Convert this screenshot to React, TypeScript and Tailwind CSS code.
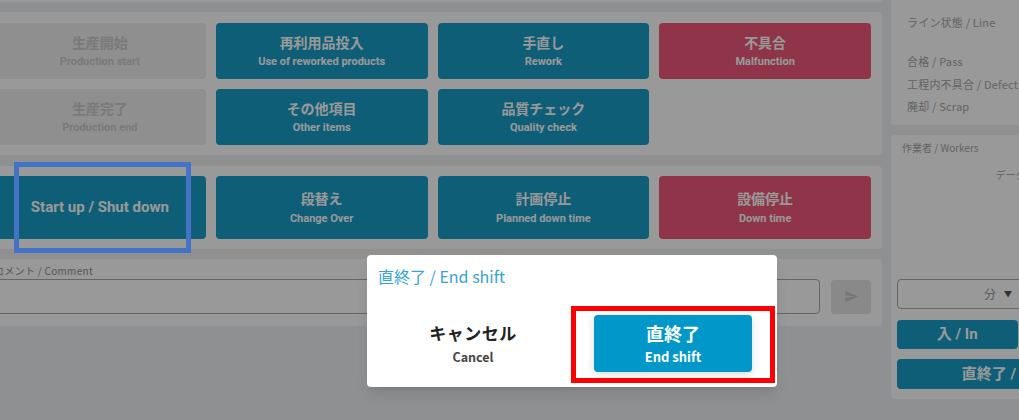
const sans = "font-['Roboto','Noto_Sans_CJK_JP',sans-serif]";
const jp = "font-['Noto_Sans_CJK_JP',sans-serif]";

type Btn = { ja: string; en: string; tone: 'off' | 'teal' | 'red' };

const topRows: (Btn | null)[] = [
  { ja: '生産開始', en: 'Production start', tone: 'off' },
  { ja: '再利用品投入', en: 'Use of reworked products', tone: 'teal' },
  { ja: '手直し', en: 'Rework', tone: 'teal' },
  { ja: '不具合', en: 'Malfunction', tone: 'red' },
  { ja: '生産完了', en: 'Production end', tone: 'off' },
  { ja: 'その他項目', en: 'Other items', tone: 'teal' },
  { ja: '品質チェック', en: 'Quality check', tone: 'teal' },
  null,
];

const stopRow: Btn[] = [
  { ja: '段替え', en: 'Change Over', tone: 'teal' },
  { ja: '計画停止', en: 'Planned down time', tone: 'teal' },
  { ja: '設備停止', en: 'Down time', tone: 'red' },
];

function toneClass(tone: Btn['tone']) {
  if (tone === 'off') return 'bg-[#eeeeee] text-[#cbcbcb]';
  if (tone === 'red') return 'bg-[#ee577b] text-white';
  return 'bg-[#189dc8] text-white';
}

function ActionButton({ b, tall }: { b: Btn; tall?: boolean }) {
  return (
    <div
      className={`flex flex-col items-center justify-center rounded-[4px] font-bold ${tall ? 'h-[63px]' : 'h-[56px]'} ${toneClass(b.tone)}`}
    >
      <span className="text-[14px] leading-[18px]">{b.ja}</span>
      <span className={`text-[11px] leading-[15px] ${tall ? 'mt-[3px]' : 'mt-[2px]'}`}>{b.en}</span>
    </div>
  );
}

function SendIcon() {
  return (
    <svg viewBox="0 0 24 24" className="h-[15px] w-[15px]" fill="currentColor">
      <path d="M2.01 21L23 12 2.01 3 2 10l15 2-15 2z" />
    </svg>
  );
}

export default function App() {
  return (
    <div className={`relative h-[420px] w-[1019px] overflow-hidden bg-[#eef0f3] ${sans}`}>
      <div className="ml-[-17px] flex gap-[9px]">
        {/* left column */}
        <div className="flex w-[899px] shrink-0 flex-col">
          <div className="h-[2px] rounded-b-[4px] bg-white" />

          <div className="mt-[10px] grid grid-cols-4 gap-[10px] rounded-[4px] bg-white px-[11px] pt-[11px] pb-[10px]">
            {topRows.map((b, i) => (b ? <ActionButton key={i} b={b} /> : <div key={i} />))}
          </div>

          <div className="mt-[11px] grid grid-cols-4 gap-[10px] rounded-[4px] bg-white p-[10px] px-[11px]">
            <div className="flex h-[63px] items-center justify-center rounded-[4px] bg-[#189dc8] text-[15px] font-bold text-white">
              Start up / Shut down
            </div>
            {stopRow.map((b) => (
              <ActionButton key={b.ja} b={b} tall />
            ))}
          </div>

          <div className="mt-[10px] rounded-[4px] bg-white px-[11px] pt-[5px] pb-[12px]">
            <p className={`text-[10px] leading-[13px] tracking-[0.3px] text-[#8e8e8e] ${jp}`}>コメント / Comment</p>
            <div className="mt-[2px] flex items-center gap-[11px]">
              <div className="h-[35px] flex-1 rounded-[4px] border border-[#a8a8a8] bg-white" />
              <div className="flex h-[34px] w-[40px] items-center justify-center rounded-[4px] bg-[#e4e4e4] text-[#c6c6c6]">
                <SendIcon />
              </div>
            </div>
          </div>
        </div>

        {/* right column */}
        <div className={`flex w-[259px] shrink-0 flex-col ${jp}`}>
          <div className="h-[125px] rounded-b-[4px] bg-white pt-[11px] pl-[16px] text-[11px] tracking-[0.2px] text-[#a6a6a6]">
            <p className="leading-[22px]">ライン状態 / Line</p>
            <div className="mt-[17px] leading-[22.5px]">
              <p>合格 / Pass</p>
              <p>工程内不具合 / Defect</p>
              <p>廃却 / Scrap</p>
            </div>
          </div>

          <div className="mt-[10px] flex h-[264px] flex-col rounded-[4px] bg-white px-[6px] pt-[6px] pb-[10px]">
            <p className="pl-[5px] text-[10px] leading-[14px] text-[#a6a6a6]">作業者 / Workers</p>
            <p className="mt-[13px] text-center text-[10px] leading-[14px] text-[#a6a6a6]">データなし</p>
            <div className="mt-auto flex gap-[6px]">
              <div className="flex h-[30px] w-[125px] items-center justify-end gap-[8px] rounded-[4px] border border-[#a8a8a8] pr-[9px] text-[12px] text-[#999]">
                <span>分</span>
                <span className="text-[8px] text-[#555]">▼</span>
              </div>
            </div>
            <div className={`mt-[11px] flex gap-[6px] ${sans}`}>
              <div className="flex h-[29px] flex-1 items-center justify-center rounded-[4px] bg-[#189dc8] text-[15px] font-bold text-white">
                入 / In
              </div>
              <div className="flex h-[29px] flex-1 items-center justify-center rounded-[4px] bg-[#189dc8] text-[15px] font-bold text-white">
                出 / Out
              </div>
            </div>
            <div
              className={`mt-[10px] flex h-[30px] items-center justify-center rounded-[4px] bg-[#189dc8] text-[15px] font-bold text-white ${sans}`}
            >
              直終了 / End shift
            </div>
          </div>
        </div>
      </div>

      {/* dim overlay */}
      <div className="absolute inset-0 bg-black/40" />

      {/* highlight box */}
      <div className="absolute top-[162px] left-[14px] h-[91px] w-[177px] border-[5px] border-[#4472c4]" />

      {/* dialog */}
      <div className={`absolute top-[255px] left-[367px] w-[410px] rounded-[4px] bg-white pt-[11px] pb-[15px] shadow-lg ${jp}`}>
        <p className="pl-[11px] text-[16px] leading-[20px] text-[#34a4d6]">直終了 / End shift</p>
        <div className="mt-[29px] flex">
          <div className="flex h-[57px] w-[212px] flex-col items-center pt-[7px] font-bold">
            <span className="text-[17px] leading-[22px] tracking-[0.5px] text-[#222]">キャンセル</span>
            <span className="mt-[4px] text-[12.5px] leading-[18px] text-[#444]">Cancel</span>
          </div>
          <div className="ml-[15px] flex h-[57px] w-[158px] flex-col items-center rounded-[4px] bg-[#0197c9] pt-[7px] font-bold text-white shadow-[0_2px_8px_rgba(0,0,0,0.15)]">
            <span className="text-[18px] leading-[22px]">直終了</span>
            <span className="mt-[4px] text-[13px] leading-[18px]">End shift</span>
          </div>
        </div>
      </div>

      {/* highlight box */}
      <div className="absolute top-[306px] left-[571px] h-[77px] w-[204px] border-[5px] border-[#ff0000]" />
    </div>
  );
}
